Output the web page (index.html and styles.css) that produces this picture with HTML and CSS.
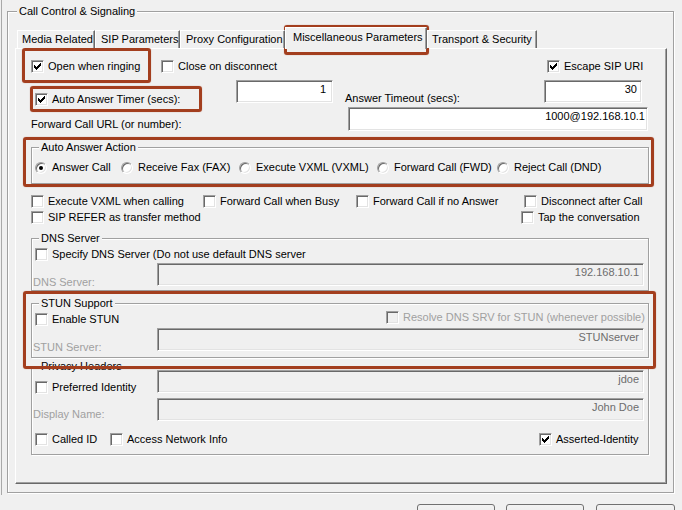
FILE: index.html
```html
<!DOCTYPE html>
<html>
<head>
<meta charset="utf-8">
<title>Call Control &amp; Signaling</title>
<link rel="stylesheet" href="styles.css">
</head>
<body>
<div class="window">
  <fieldset class="grp outer">
    <legend>Call Control &amp; Signaling</legend>
    <div class="tabs">
      <div class="tab t1">Media Related</div>
      <div class="tab t2">SIP Parameters</div>
      <div class="tab t3">Proxy Configuration</div>
      <div class="tab tab-sel t4">Miscellaneous Parameters</div>
      <div class="tab t5">Transport &amp; Security</div>
    </div>
    <div class="panel">
      <div class="row-a">
        <label class="cb"><span class="box"><svg class="tick" viewBox="0 0 7 7" width="7" height="7"><path d="M6 0h1v1h-1zM5 1h2v1h-2zM0 2h1v1h-1zM4 2h3v1h-3zM0 3h2v1h-2zM3 3h3v1h-3zM0 4h5v1h-5zM1 5h3v1h-3zM2 6h1v1h-1z"/></svg></span>Open when ringing</label>
        <label class="cb"><span class="box"></span>Close on disconnect</label>
        <label class="cb"><span class="box"><svg class="tick" viewBox="0 0 7 7" width="7" height="7"><path d="M6 0h1v1h-1zM5 1h2v1h-2zM0 2h1v1h-1zM4 2h3v1h-3zM0 3h2v1h-2zM3 3h3v1h-3zM0 4h5v1h-5zM1 5h3v1h-3zM2 6h1v1h-1z"/></svg></span>Escape SIP URI</label>
      </div>
      <div class="row-b">
        <label class="cb cb-timer"><span class="box"><svg class="tick" viewBox="0 0 7 7" width="7" height="7"><path d="M6 0h1v1h-1zM5 1h2v1h-2zM0 2h1v1h-1zM4 2h3v1h-3zM0 3h2v1h-2zM3 3h3v1h-3zM0 4h5v1h-5zM1 5h3v1h-3zM2 6h1v1h-1z"/></svg></span>Auto Answer Timer (secs):</label>
        <div class="edit w97">1</div>
        <span class="lbl lbl-timeout">Answer Timeout (secs):</span>
        <div class="edit w98">30</div>
      </div>
      <div class="row-c">
        <span class="lbl lbl-fwd">Forward Call URL (or number):</span>
        <div class="edit w300 h24">1000@192.168.10.1</div>
      </div>

      <fieldset class="grp inner aa">
        <legend>Auto Answer Action</legend>
        <div class="radios">
          <label class="rb"><span class="radio on"></span>Answer Call</label>
          <label class="rb"><span class="radio"></span>Receive Fax (FAX)</label>
          <label class="rb"><span class="radio"></span>Execute VXML (VXML)</label>
          <label class="rb"><span class="radio"></span>Forward Call (FWD)</label>
          <label class="rb"><span class="radio"></span>Reject Call (DND)</label>
        </div>
      </fieldset>

      <div class="row-d">
        <label class="cb"><span class="box"></span>Execute VXML when calling</label>
        <label class="cb"><span class="box"></span>Forward Call when Busy</label>
        <label class="cb"><span class="box"></span>Forward Call if no Answer</label>
        <label class="cb"><span class="box"></span>Disconnect after Call</label>
      </div>
      <div class="row-e">
        <label class="cb"><span class="box"></span>SIP REFER as transfer method</label>
        <label class="cb"><span class="box"></span>Tap the conversation</label>
      </div>

      <fieldset class="grp inner sub dns">
        <legend>DNS Server</legend>
        <label class="cb cb-sub"><span class="box"></span>Specify DNS Server (Do not use default DNS server</label>
        <div class="field-row fr-dns">
          <span class="lbl dis field-lbl fl-13">DNS Server:</span>
          <div class="edit off w487">192.168.10.1</div>
        </div>
      </fieldset>

      <fieldset class="grp inner sub stun">
        <legend>STUN Support</legend>
        <div class="stun-row">
          <label class="cb cb-sub cb-stun"><span class="box"></span>Enable STUN</label>
          <label class="cb cb-srv dis"><span class="box off"></span>Resolve DNS SRV for STUN (whenever possible)</label>
        </div>
        <div class="field-row fr-stun">
          <span class="lbl dis field-lbl fl-13">STUN Server:</span>
          <div class="edit off w487">STUNserver</div>
        </div>
      </fieldset>

      <fieldset class="grp inner sub priv">
        <legend>Privacy Headers</legend>
        <div class="field-row fr-pref">
          <label class="cb cb-sub cb-pref"><span class="box"></span>Preferred Identity</label>
          <div class="edit off w487">jdoe</div>
        </div>
        <div class="field-row fr-disp">
          <span class="lbl dis field-lbl fl-10">Display Name:</span>
          <div class="edit off w487">John Doe</div>
        </div>
        <div class="priv-row">
          <label class="cb cb-sub cb-called"><span class="box"></span>Called ID</label>
          <label class="cb cb-ani"><span class="box"></span>Access Network Info</label>
          <label class="cb"><span class="box"><svg class="tick" viewBox="0 0 7 7" width="7" height="7"><path d="M6 0h1v1h-1zM5 1h2v1h-2zM0 2h1v1h-1zM4 2h3v1h-3zM0 3h2v1h-2zM3 3h3v1h-3zM0 4h5v1h-5zM1 5h3v1h-3zM2 6h1v1h-1z"/></svg></span>Asserted-Identity</label>
        </div>
      </fieldset>
    </div>
  </fieldset>
</div>
<div class="buttons">
  <button class="btn" type="button"></button>
  <button class="btn" type="button"></button>
  <button class="btn btn-last" type="button"></button>
</div>

<div class="mark m-tab"></div>
<div class="mark m-open"></div>
<div class="mark m-timer"></div>
<div class="mark m-action"></div>
<div class="mark m-stun"></div>
</body>
</html>
```
FILE: styles.css
```css
* { box-sizing: border-box; }
html, body { margin: 0; padding: 0; }
body {
  width: 682px;
  height: 510px;
  overflow: hidden;
  position: relative;
  background: #f0f0f0;
  color: #000;
  font: 11px/13px "Liberation Sans", Arial, sans-serif;
}

.window {
  margin-left: 1px;
  border-left: 1px solid #a9a9a9;
  padding: 5px 0 2px 0;
}

/* group boxes */
.grp {
  margin: 0;
  min-width: 0;
  border: 1px solid #a0a0a0;
  box-shadow: 1px 1px 0 #fff, inset 1px 1px 0 #fff;
}
.grp > legend {
  padding: 0 2px;
  line-height: 13px;
  background: #f0f0f0;
}
.outer {
  margin-left: 5px;
  width: 667px;
  padding: 0 6px 8px 7px;
}
.outer > legend { margin-left: 2px; }

/* tabs */
.tabs {
  display: flex;
  align-items: flex-end;
  height: 21px;
  margin: 9px 0 0 2px;
  position: relative;
  z-index: 1;
}
.tab {
  height: 18px;
  line-height: 16px;
  white-space: nowrap;
  background: #f0f0f0;
  border-top: 1px solid #fff;
  border-left: 1px solid #fff;
  border-right: 1px solid #696969;
  box-shadow: inset -1px 0 0 #a0a0a0;
}
.t1 { width: 78px; padding-left: 4px; }
.t2 { width: 85px; padding-left: 5px; }
.t3 { width: 105px; padding-left: 5px; }
.t4 { width: 142px; padding-left: 7px; }
.t5 { width: 110px; padding-left: 4px; }
.tab-sel {
  height: 22px;
  line-height: 18px;
  margin-bottom: -1px;
}

.panel {
  height: 436px;
  border-top: 1px solid #fff;
  border-left: 1px solid #fff;
  border-right: 1px solid #696969;
  border-bottom: 1px solid #696969;
  box-shadow: inset -1px -1px 0 #a0a0a0;
}

/* controls */
.cb, .rb {
  display: flex;
  align-items: center;
  height: 13px;
  white-space: nowrap;
}
.cb { gap: 4px; }
.rb { gap: 5px; }
.box {
  flex: none;
  width: 13px;
  height: 13px;
  display: flex;
  align-items: center;
  justify-content: center;
  background: #fff;
  border: 1px solid;
  border-color: #a0a0a0 #fff #fff #a0a0a0;
  box-shadow: inset 1px 1px 0 #696969, inset -1px -1px 0 #e3e3e3;
}
.box.off { background: #f0f0f0; }
.tick { display: block; fill: #000; }
.radio {
  flex: none;
  width: 12px;
  height: 12px;
  border-radius: 50%;
  background: #fff;
  border: 1px solid;
  border-color: #a0a0a0 #fff #fff #a0a0a0;
  box-shadow: inset 1px 1px 0 #696969, inset -1px -1px 0 #e3e3e3;
  display: flex;
  align-items: center;
  justify-content: center;
}
.radio.on::after {
  content: "";
  width: 4px;
  height: 4px;
  border-radius: 50%;
  background: #000;
}

.edit {
  flex: none;
  height: 23px;
  background: #fff;
  border: 1px solid;
  border-color: #a0a0a0 #fff #fff #a0a0a0;
  box-shadow: inset 1px 1px 0 #696969, inset -1px -1px 0 #e3e3e3;
  text-align: right;
  padding: 2px 4px 0 0;
  line-height: 13px;
  white-space: nowrap;
  overflow: hidden;
}
.edit.off { background: #f0f0f0; color: #6d6d6d; }
.w97 { width: 97px; padding-right: 6px; }
.w98 { width: 98px; }
.w300 { width: 300px; padding-right: 2px; }
.h24 { height: 24px; }
.w487 { width: 487px; }

.dis { color: #a0a0a0; }

/* panel rows */
.row-a {
  display: grid;
  grid-template-columns: 130px 386px auto;
  margin: 11px 0 0 15px;
}
.row-b {
  display: flex;
  align-items: flex-start;
  margin: 7px 0 0 19px;
}
.cb-timer { width: 201px; margin-top: 13px; }
.lbl-timeout { width: 199px; margin: 12px 0 0 12px; }
.row-c {
  display: flex;
  align-items: flex-start;
  margin: 1px 0 0 15px;
}
.lbl-fwd { width: 317px; margin-top: 11px; }

.inner { width: 618px; margin-left: 15px; }
.aa { margin-top: 10px; padding: 7px 0 9px 3px; }
.aa > legend { margin-left: 4px; }
.radios {
  display: grid;
  grid-template-columns: 86px 118px 138px 120px auto;
}

.row-d {
  display: grid;
  grid-template-columns: 172px 153px 168px auto;
  margin: 11px 0 0 15px;
}
.row-e {
  display: grid;
  grid-template-columns: 490px auto;
  margin: 3px 0 0 15px;
}

.sub > legend { margin-left: 7px; }
.cb-sub { margin-left: 3px; }
.field-row {
  display: flex;
  align-items: flex-start;
}
.field-lbl { width: 124px; margin-left: 1px; }
.fl-13 { margin-top: 13px; }
.fl-10 { margin-top: 10px; }

.dns { margin-top: 8px; padding: 3px 0 1px 0; }
.fr-dns { margin-top: 2px; }

.stun { margin-top: 6px; padding: 1px 0 3px 0; }
.stun-row { display: flex; align-items: flex-start; }
.cb-stun { width: 351px; margin-top: 2px; }
.cb-srv { width: 258px; }
.fr-stun { margin-top: 2px; }

.priv { margin-top: 2px; padding: 0 0 8px 0; }
.fr-pref { margin-top: -3px; }
.cb-pref { width: 122px; margin-top: 11px; }
.fr-disp { margin-top: 4px; }
.priv-row { display: flex; margin-top: 12px; }
.cb-called { width: 75px; }
.cb-ani { width: 429px; }

/* bottom buttons */
.buttons {
  display: flex;
  justify-content: flex-end;
  gap: 11px;
  margin-top: 9px;
  padding-right: 7px;
}
.btn {
  width: 78px;
  height: 23px;
  margin: 0;
  padding: 0;
  border: 1px solid #707070;
  border-radius: 3px;
  background: linear-gradient(#f2f2f2, #ebebeb 50%, #dddddd 51%, #cfcfcf);
}
.btn-last { width: 79px; margin-left: 1px; }

/* red annotation frames drawn over the dialog */
.mark {
  position: absolute;
  border: 3px solid #a33e1e;
  border-radius: 3px;
  box-shadow: 0 0 1px rgba(163, 62, 30, 0.6);
  pointer-events: none;
}
.m-tab { left: 284px; top: 25px; width: 145px; height: 30px; }
.m-open { left: 22px; top: 48px; width: 129px; height: 35px; }
.m-timer { left: 30px; top: 86px; width: 172px; height: 26px; }
.m-action { left: 23px; top: 137px; width: 631px; height: 50px; }
.m-stun { left: 23px; top: 291px; width: 633px; height: 78px; }
```
